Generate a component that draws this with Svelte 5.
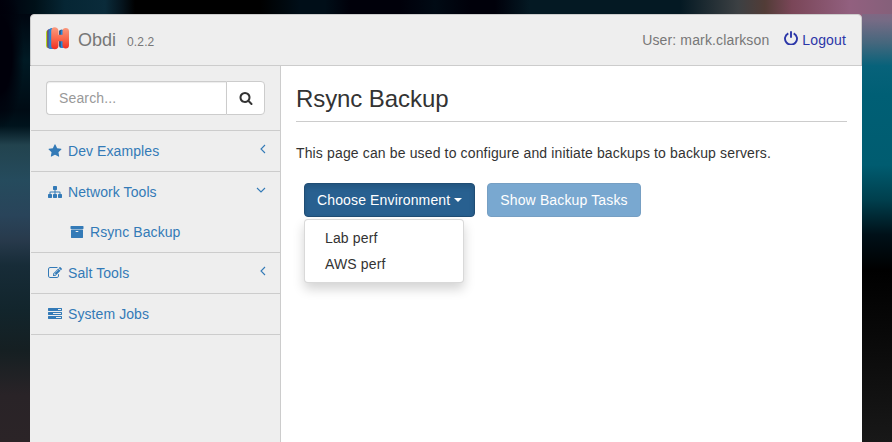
<script>
  const icons = {
    star: 'M1728 647q0 22-26 48l-363 354 86 500q1 7 1 20 0 21-10.5 35.5t-30.5 14.5q-19 0-40-12l-449-236-449 236q-22 12-40 12-21 0-31.5-14.5t-10.5-35.5q0-6 2-20l86-500-364-354q-25-27-25-48 0-37 56-46l502-73 225-455q19-41 49-41t49 41l225 455 502 73q56 9 56 46z',
    sitemap: 'M1792 1248v320q0 40-28 68t-68 28h-320q-40 0-68-28t-28-68v-320q0-40 28-68t68-28h96v-192h-512v192h96q40 0 68 28t28 68v320q0 40-28 68t-68 28h-320q-40 0-68-28t-28-68v-320q0-40 28-68t68-28h96v-192h-512v192h96q40 0 68 28t28 68v320q0 40-28 68t-68 28h-320q-40 0-68-28t-28-68v-320q0-40 28-68t68-28h96v-192q0-52 38-90t90-38h512v-192h-96q-40 0-68-28t-28-68v-320q0-40 28-68t68-28h320q40 0 68 28t28 68v320q0 40-28 68t-68 28h-96v192h512q52 0 90 38t38 90v192h96q40 0 68 28t28 68z',
    archive: 'M1088 832q0-26-19-45t-45-19h-256q-26 0-45 19t-19 45 19 45 45 19h256q26 0 45-19t19-45zm576-192v960q0 26-19 45t-45 19h-1408q-26 0-45-19t-19-45v-960q0-26 19-45t45-19h1408q26 0 45 19t19 45zm64-448v256q0 26-19 45t-45 19h-1536q-26 0-45-19t-19-45v-256q0-26 19-45t45-19h1536q26 0 45 19t19 45z',
    edit: 'M888 1184l116-116-152-152-116 116v56h96v96h56zm440-720q-16-16-33 1l-350 350q-17 17-1 33t33-1l350-350q17-17 1-33zm80 594v190q0 119-84.5 203.5t-203.5 84.5h-832q-119 0-203.5-84.5t-84.5-203.5v-832q0-119 84.5-203.5t203.5-84.5h832q63 0 117 25 15 7 18 23 3 17-9 29l-49 49q-14 14-32 8-23-6-45-6h-832q-66 0-113 47t-47 113v832q0 66 47 113t113 47h832q66 0 113-47t47-113v-126q0-13 9-22l64-64q15-15 35-7t20 29zm-96-738l288 288-672 672h-288v-288zm444 132l-92 92-288-288 92-92q28-28 68-28t68 28l152 152q28 28 28 68t-28 68z',
    tasks: 'M1024 1408h640v-128h-640v128zm-384-512h1024v-128h-1024v128zm640-512h384v-128h-384v128zm512 832v256q0 26-19 45t-45 19h-1664q-26 0-45-19t-19-45v-256q0-26 19-45t45-19h1664q26 0 45 19t19 45zm0-512v256q0 26-19 45t-45 19h-1664q-26 0-45-19t-19-45v-256q0-26 19-45t45-19h1664q26 0 45 19t19 45zm0-512v256q0 26-19 45t-45 19h-1664q-26 0-45-19t-19-45v-256q0-26 19-45t45-19h1664q26 0 45 19t19 45z',
    search: 'M1216 832q0-185-131.5-316.5t-316.5-131.5-316.5 131.5-131.5 316.5 131.5 316.5 316.5 131.5 316.5-131.5 131.5-316.5zm512 832q0 52-38 90t-90 38q-54 0-90-38l-343-342q-179 124-399 124-143 0-273.5-55.5t-225-150-150-225-55.5-273.5 55.5-273.5 150-225 225-150 273.5-55.5 273.5 55.5 225 150 150 225 55.5 273.5q0 220-124 399l343 343q37 37 37 90z'
  };
  const menu = [
    { icon: 'star', label: 'Dev Examples', arrow: 'left' },
    { icon: 'sitemap', label: 'Network Tools', arrow: 'down', children: [{ icon: 'archive', label: 'Rsync Backup' }] },
    { icon: 'edit', label: 'Salt Tools', arrow: 'left' },
    { icon: 'tasks', label: 'System Jobs' }
  ];
  const environments = ['Lab perf', 'AWS perf'];
</script>

{#snippet icon(name)}
  <svg class="icon" viewBox="0 0 1792 1792"><path d={icons[name]} /></svg>
{/snippet}

<div class="page">
  <div class="wrapper">
    <header>
      <div class="brand">
        <svg class="logo" viewBox="0 0 24 24">
          <defs>
            <linearGradient id="red" x1="0" y1="0" x2="0" y2="1">
              <stop offset="0" stop-color="#fa9b80" />
              <stop offset=".5" stop-color="#fa6a4e" />
              <stop offset="1" stop-color="#f02d20" />
            </linearGradient>
          </defs>
          <rect x="0" y="4" width="7" height="18" rx="2.5" fill="#b4d820" />
          <rect x="1.2" y="3" width="7" height="19.5" rx="2.5" fill="#6b3d78" />
          <rect x="2.4" y="2.4" width="7" height="20.5" rx="2.5" fill="#3d7fbd" />
          <rect x="3.6" y="2" width="6" height="21" rx="2.5" fill="#1e87dc" />
          <path d="M13 10V5Q13.500 3.500 16 3.500L17.500 5V10ZM13 14H17.500V21L16 22Q13 22 13 19.500Z" fill="#335a88" />
          <path d="M15 10V4.500L17.500 3.500V10ZM15 14H17.500V22H15Z" fill="#1e87dc" />
          <path d="M5.200 5C5.200 2.500 6.500 1.200 8.600 1.200S12.500 2.500 12.500 5V8.800H16.500V5.200C16.500 3.200 17.700 2 19.700 2S23 3.200 23 5.200V19.200C23 21.300 21.700 22.500 19.700 22.500S16.500 21.300 16.500 19.200V15.300H12.500V19.500C12.500 22 11 23.200 8.800 23.200S5.200 22 5.200 19.500Z" fill="url(#red)" />
        </svg>
        <span class="name">Obdi</span>
        <span class="version">0.2.2</span>
      </div>
      <div class="account">
        <span>User: mark.clarkson</span>
        <a href="#logout">
          <svg class="power" viewBox="0 0 14 14"><path d="M4.300 2.300A6 6 0 1 0 9.700 2.300M7 .2V6.800" /></svg>Logout
        </a>
      </div>
    </header>
    <div class="body">
      <aside>
        <div class="search">
          <input type="text" placeholder="Search..." />
          <button aria-label="Search">{@render icon('search')}</button>
        </div>
        <ul class="menu">
          {#each menu as item}
            <li>
              <a href="#menu">
                <span class="fw">{@render icon(item.icon)}</span>{item.label}
                {#if item.arrow}
                  <svg class="arrow {item.arrow}" viewBox="0 0 10 10"><path d={item.arrow === 'left' ? 'M7 1L3 5L7 9' : 'M1 3L5 7L9 3'} /></svg>
                {/if}
              </a>
              {#each item.children ?? [] as child}
                <a class="child" href="#child"><span class="fw">{@render icon(child.icon)}</span>{child.label}</a>
              {/each}
            </li>
          {/each}
        </ul>
      </aside>
      <main>
        <h1>Rsync Backup</h1>
        <p>This page can be used to configure and initiate backups to backup servers.</p>
        <div class="actions">
          <div class="dropdown">
            <button class="btn open">Choose Environment<span class="caret"></span></button>
            <ul class="options">
              {#each environments as env}<li>{env}</li>{/each}
            </ul>
          </div>
          <button class="btn" disabled>Show Backup Tasks</button>
        </div>
      </main>
    </div>
  </div>
</div>

<style>
  .page, .page * { box-sizing: border-box; }
  .page {
    height: 442px;
    padding: 14px 30px 0;
    overflow: hidden;
    font: 14px/20px "Liberation Sans", Arial, sans-serif;
    letter-spacing: 0.14px;
    color: #333;
    background:
      radial-gradient(ellipse 24px 75px at 0 55px, #00000a 50%, transparent) 0 0 / 30px 130px no-repeat,
      linear-gradient(90deg, #00000c 0, #001018 35px, #062634 65px, #0a2b3a 105px, #05141d 122px, #000 135px, #000 260px, #000e18 300px, #000e18 325px, #00000a 350px, #00000a 400px, #000a14 435px, #00000a 470px, #00000a 495px, #041923 530px, #041923 680px, #3c4043 738px, #523c37 765px, #7a4658 792px, #92607f 850px, #85607a 892px) 0 0 / 100% 14px no-repeat,
      linear-gradient(180deg, #00000a 0, #001a24 60px, #000b14 110px, #00131c 126px, #22434e 145px, #254b5d 180px, #29445a 215px, #283a4c 240px, #172c38 265px, #12252c 310px, #151f22 350px, #292327 395px, #2b2427 442px) 0 0 / 30px 100% no-repeat,
      linear-gradient(180deg, #92607f 0, #776b85 20px, #45677d 43px, #07627a 66px, #005f75 95px, #005c70 165px, #003f4d 200px, #001018 235px, #000 270px, #080808 330px, #181818 442px) 862px 0 / 30px 100% no-repeat,
      linear-gradient(90deg, #00000c 50%, #92607f 50%);
  }
  a { color: #337ab7; text-decoration: none; }
  ul { list-style: none; margin: 0; padding: 0; }
  .icon { width: 14px; height: 14px; fill: currentColor; display: block; }
  .wrapper { height: 428px; display: flex; flex-direction: column; }
  header {
    height: 52px;
    flex: none;
    display: flex;
    justify-content: space-between;
    align-items: center;
    padding: 0 15px;
    color: #777;
    background: #eee;
    border: 1px solid #ccc;
    border-radius: 4px 4px 0 0;
  }
  .brand { display: flex; align-items: center; }
  .logo { width: 24px; height: 24px; margin-top: -4px; }
  .name { font-size: 18px; margin-left: 8px; letter-spacing: 0; }
  .version { font-size: 12px; margin: 4px 0 0 11px; }
  .account { display: flex; gap: 15px; }
  .account a { display: flex; color: #2b36a8; }
  .power { width: 14px; height: 14px; margin: 1px 4px 0 0; fill: none; stroke: currentColor; stroke-width: 1.9; }
  .body { flex: 1; display: flex; min-height: 0; }
  aside { width: 251px; flex: none; background: #eee; border-right: 1px solid #ccc; }
  .search { display: flex; height: 34px; margin: 15px 15px 15px 16px; }
  .search input {
    flex: 1;
    min-width: 0;
    padding: 0 12px;
    font: inherit;
    letter-spacing: inherit;
    border: 1px solid #ccc;
    border-right: 0;
    border-radius: 4px 0 0 4px;
    box-shadow: inset 0 1px 1px rgba(0, 0, 0, .075);
    background: #fff;
    outline: 0;
  }
  .search input::placeholder { color: #999; opacity: 1; }
  .search button {
    width: 39px;
    padding: 0 0 0 12px;
    color: #333;
    background: #fff;
    border: 1px solid #ccc;
    border-radius: 0 4px 4px 0;
  }
  .menu { margin-left: 1px; border-top: 1px solid #ccc; }
  .menu li { border-bottom: 1px solid #ccc; }
  .menu a { display: flex; align-items: center; height: 40px; padding: 0 15px; letter-spacing: 0.08px; }
  .menu .child { padding-left: 37px; }
  .fw { width: 18px; margin-right: 4px; display: flex; justify-content: center; }
  .arrow { width: 10px; height: 10px; margin: -5px 0 0 auto; fill: none; stroke: currentColor; stroke-width: 1.1; }
  .arrow.left { margin-right: -3px; }
  .arrow.down { margin-right: -1px; }
  main { flex: 1; padding: 0 15px; background: #fff; }
  h1 { margin: 20px 0 21px; padding-bottom: 9px; border-bottom: 1px solid #ccc; font-size: 24px; line-height: 26px; font-weight: 400; letter-spacing: -0.08px; }
  p { margin: 0 0 20px; }
  .actions { display: flex; gap: 12px; padding-left: 8px; }
  .dropdown { position: relative; }
  .btn {
    display: flex;
    align-items: center;
    height: 34px;
    padding: 0 12px;
    font: inherit;
    letter-spacing: inherit;
    color: #fff;
    background: #337ab7;
    border: 1px solid #2e6da4;
    border-radius: 4px;
    white-space: nowrap;
  }
  .btn:disabled { opacity: .65; }
  .open { background: #286090; border-color: #204d74; box-shadow: inset 0 3px 5px rgba(0, 0, 0, .125); }
  .caret { margin-left: 4px; border: 4px solid transparent; border-top-color: #fff; border-bottom: 0; }
  .options {
    position: absolute;
    top: 36px;
    left: 0;
    width: 160px;
    height: 64px;
    padding: 5px 0;
    background: #fff;
    border: 1px solid rgba(0, 0, 0, .15);
    border-radius: 4px;
    box-shadow: 0 6px 12px rgba(0, 0, 0, .175);
  }
  .options li { height: 26px; line-height: 26px; padding: 0 20px; }
</style>
